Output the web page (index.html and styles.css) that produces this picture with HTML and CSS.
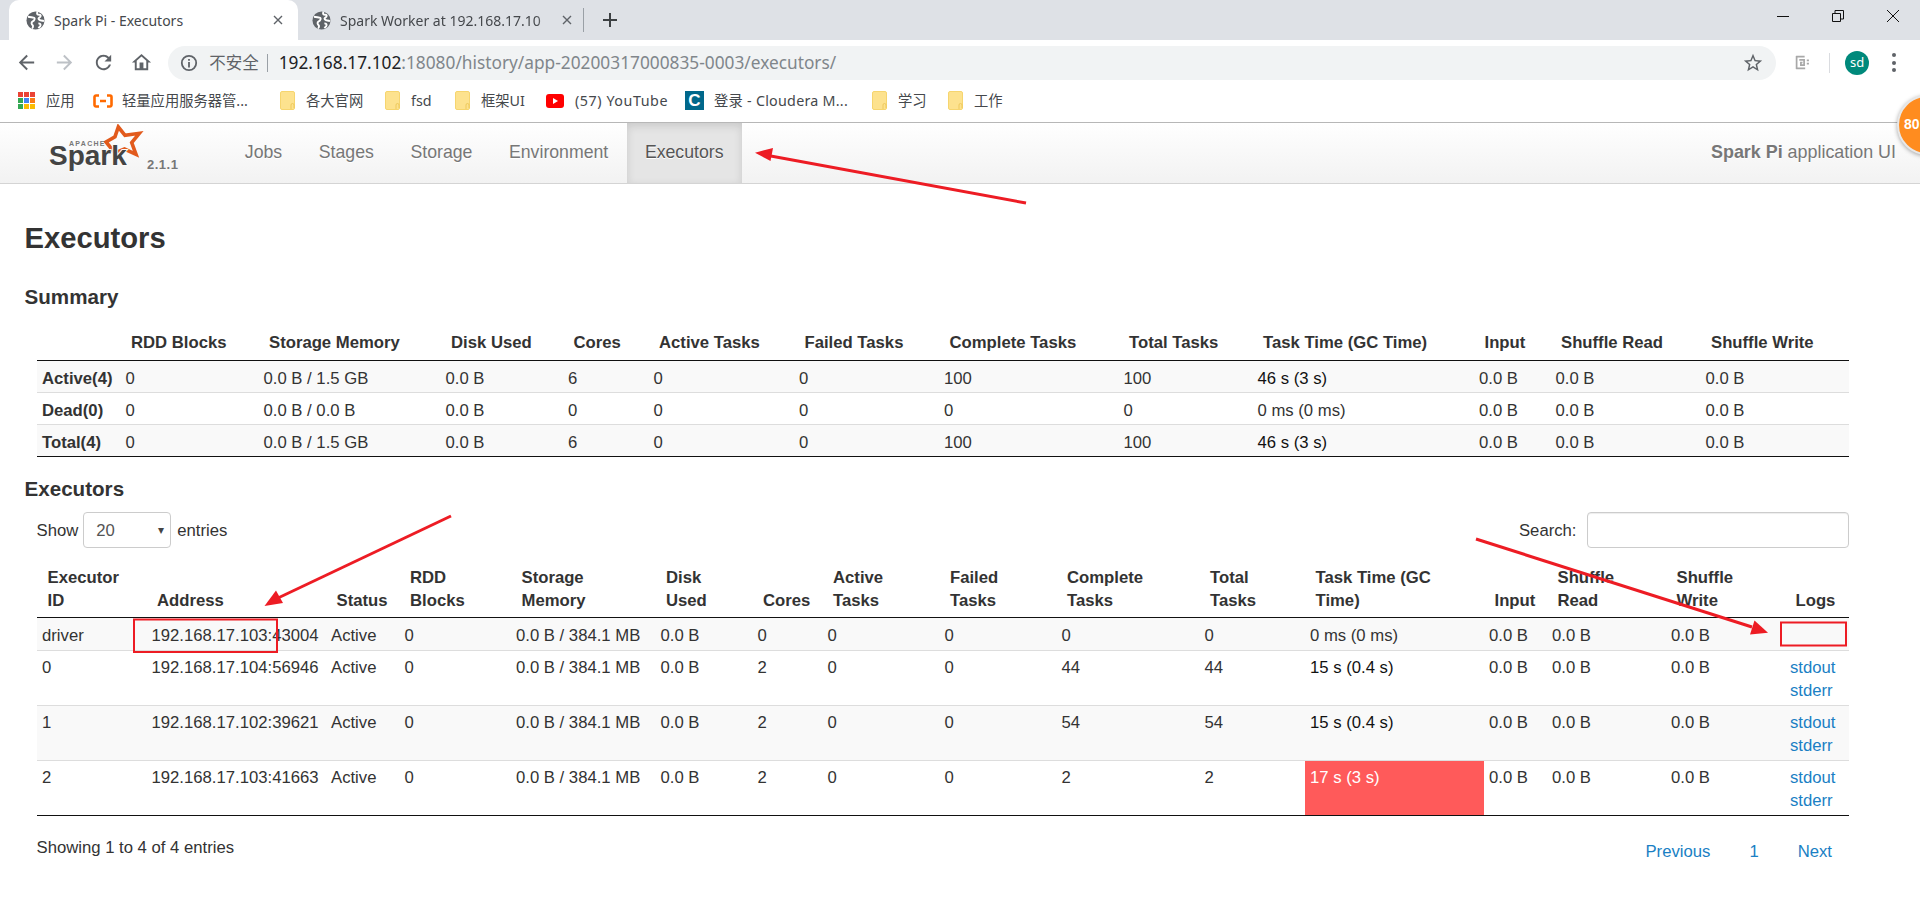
FILE: index.html
```html
<!DOCTYPE html>
<html lang="zh">
<head>
<meta charset="utf-8">
<title>Spark Pi - Executors</title>
<link rel="stylesheet" href="styles.css">
</head>
<body>
<svg class="defs" width="0" height="0">
  <symbol id="globe" viewBox="0 0 20 20">
    <circle cx="10" cy="10" r="9.5" fill="#5f6368"/>
    <path d="M2 6c3 0 4 1 6 1s1 3-1 4-1 3 0 4 0 3-1 3M12 1c-1 2 0 3 2 3s2 2 0 3 0 3 2 3 3 1 3 1M13 13c2 0 3 1 2 3l-2 2" fill="none" stroke="#fff" stroke-width="2"/>
  </symbol>
  <symbol id="folder" viewBox="0 0 15 19">
    <rect x=".5" y=".5" width="14" height="18" rx="1.5" fill="#fde28e" stroke="#f6d56f"/>
    <path d="M11 18v-4a1.5 1.5 0 0 1 3 0v3" fill="none" stroke="#eec95c"/>
  </symbol>
</svg>

<header class="chrome">
  <div class="tabstrip">
    <div class="tab tab-active">
      <svg class="favicon"><use href="#globe"/></svg>
      <span class="tab-title">Spark Pi - Executors</span>
      <svg class="tab-close" viewBox="0 0 10 10"><path d="M1 1l8 8M9 1l-8 8"/></svg>
    </div>
    <div class="tab tab-second">
      <svg class="favicon"><use href="#globe"/></svg>
      <span class="tab-title tab-fade">Spark Worker at 192.168.17.10</span>
      <svg class="tab-close" viewBox="0 0 10 10"><path d="M1 1l8 8M9 1l-8 8"/></svg>
    </div>
    <span class="tab-sep"></span>
    <svg class="tab-new" viewBox="0 0 14 14"><path d="M7 0v14M0 7h14"/></svg>
    <div class="winctl">
      <svg viewBox="0 0 12 12"><path d="M0 6.5h12"/></svg>
      <svg viewBox="0 0 12 12"><path d="M.5 3.5h8v8h-8zM3 3V.5h8.500V9H9"/></svg>
      <svg viewBox="0 0 12 12"><path d="M0 0l12 12M12 0L0 12"/></svg>
    </div>
  </div>

  <div class="toolbar">
    <svg class="tool-icon ic-dark" viewBox="0 0 24 24"><path d="M20 11H7.830l5.590-5.590L12 4l-8 8 8 8 1.410-1.410L7.830 13H20v-2z"/></svg>
    <svg class="tool-icon ic-light" viewBox="0 0 24 24"><path d="M4 11h12.170l-5.590-5.590L12 4l8 8-8 8-1.410-1.410L16.170 13H4v-2z"/></svg>
    <svg class="tool-icon ic-dark" viewBox="0 0 24 24"><path d="M17.650 6.350C16.200 4.900 14.210 4 12 4c-4.420 0-7.990 3.580-7.990 8s3.570 8 7.990 8c3.730 0 6.840-2.550 7.730-6h-2.080c-.82 2.330-3.040 4-5.650 4-3.310 0-6-2.690-6-6s2.690-6 6-6c1.660 0 3.140.69 4.220 1.780L13 11h7V4l-2.350 2.350z"/></svg>
    <svg class="tool-icon ic-dark" viewBox="0 0 24 24"><path d="M12 5.690l5 4.500V18h-3v-6h-4v6H7v-7.810l5-4.500M12 3L2 12h3v8h14v-8h3L12 3z"/></svg>
    <div class="omnibox">
      <svg class="omni-info" viewBox="0 0 20 20"><circle cx="10" cy="10" r="8" fill="none" stroke="#5f6368" stroke-width="2"/><path d="M9 9h2v6H9zM9 5.500h2v2H9z" fill="#5f6368"/></svg>
      <span class="omni-warn">不安全</span>
      <span class="omni-sep"></span>
      <span class="omni-url"><span class="omni-host">192.168.17.102</span>:18080/history/app-20200317000835-0003/executors/</span>
      <svg class="omni-star" viewBox="0 0 24 24"><path d="M22 9.240l-7.190-.62L12 2 9.190 8.630 2 9.240l5.460 4.730L5.820 21 12 17.270 18.180 21l-1.630-7.030L22 9.240zM12 15.400l-3.760 2.270 1-4.280-3.320-2.880 4.380-.38L12 6.100l1.710 4.040 4.380.38-3.320 2.880 1 4.280L12 15.400z"/></svg>
    </div>
    <svg class="ext-icon" viewBox="0 0 14 14"><path d="M1 1.500h8M1.500 1v12M1 12.500h8.500M4 4.500h4.500v5H5.500V7H7M11 5h2M11 8h2" fill="none" stroke="#a8a8a8" stroke-width="1.600"/></svg>
    <span class="tool-sep"></span>
    <span class="avatar">sd</span>
    <span class="menu-dots"><i></i><i></i><i></i></span>
  </div>

  <div class="bookmarks">
    <div class="bm">
      <span class="apps">
        <i class="c-r"></i><i class="c-r"></i><i class="c-r"></i>
        <i class="c-g"></i><i class="c-b"></i><i class="c-o"></i>
        <i class="c-g"></i><i class="c-y"></i><i class="c-y"></i>
      </span>
      <span>应用</span>
    </div>
    <div class="bm">
      <svg class="bm-ali" viewBox="0 0 20 14"><path d="M6 1.500H3A1.500 1.500 0 0 0 1.500 3v8A1.500 1.500 0 0 0 3 12.500h3M14 1.500h3A1.500 1.500 0 0 1 18.500 3v8a1.500 1.500 0 0 1-1.500 1.500h-3M7 7h6"/></svg>
      <span>轻量应用服务器管...</span>
    </div>
    <div class="bm"><svg class="bm-folder"><use href="#folder"/></svg><span>各大官网</span></div>
    <div class="bm"><svg class="bm-folder"><use href="#folder"/></svg><span>fsd</span></div>
    <div class="bm"><svg class="bm-folder"><use href="#folder"/></svg><span>框架UI</span></div>
    <div class="bm">
      <svg class="bm-yt" viewBox="0 0 18 14"><rect width="18" height="14" rx="3" fill="#f00"/><path d="M7 4l5 3-5 3z" fill="#fff"/></svg>
      <span class="bm-wide">(57) YouTube</span>
    </div>
    <div class="bm"><span class="bm-c">C</span><span class="bm-wider">登录 - Cloudera M...</span></div>
    <div class="bm"><svg class="bm-folder"><use href="#folder"/></svg><span>学习</span></div>
    <div class="bm"><svg class="bm-folder"><use href="#folder"/></svg><span>工作</span></div>
  </div>
</header>

<nav class="navbar">
  <div class="brand">
    <svg class="logo" viewBox="0 0 100 50">
      <polygon class="logo-star" points="73.300,3 80,11.300 94.300,9.300 86.700,18.700 91,30.300 79.500,25 70,29 61,18 70,12.700"/>
      <text class="logo-apache" x="24" y="22">APACHE</text>
      <text class="logo-spark" x="4" y="41">Spark</text>
    </svg>
    <span class="version">2.1.1</span>
  </div>
  <a class="nav-link">Jobs</a>
  <a class="nav-link">Stages</a>
  <a class="nav-link">Storage</a>
  <a class="nav-link">Environment</a>
  <a class="nav-link nav-active">Executors</a>
  <p class="nav-right"><strong>Spark Pi</strong> application UI</p>
</nav>

<main class="content">
  <h1>Executors</h1>
  <h2 class="h-summary">Summary</h2>
  <table class="grid summary">
    <colgroup>
      <col class="s1"><col class="s2"><col class="s3"><col class="s4"><col class="s5"><col class="s6"><col class="s7"><col class="s8"><col class="s9"><col class="s10"><col class="s11"><col class="s12"><col class="s13">
    </colgroup>
    <thead>
      <tr><th></th><th>RDD Blocks</th><th>Storage Memory</th><th>Disk Used</th><th>Cores</th><th>Active Tasks</th><th>Failed Tasks</th><th>Complete Tasks</th><th>Total Tasks</th><th>Task Time (GC Time)</th><th>Input</th><th>Shuffle Read</th><th>Shuffle Write</th></tr>
    </thead>
    <tbody>
      <tr class="odd"><td class="rowhead">Active(4)</td><td>0</td><td>0.0 B / 1.5 GB</td><td>0.0 B</td><td>6</td><td>0</td><td>0</td><td>100</td><td>100</td><td class="dark">46 s (3 s)</td><td>0.0 B</td><td>0.0 B</td><td>0.0 B</td></tr>
      <tr><td class="rowhead">Dead(0)</td><td>0</td><td>0.0 B / 0.0 B</td><td>0.0 B</td><td>0</td><td>0</td><td>0</td><td>0</td><td>0</td><td>0 ms (0 ms)</td><td>0.0 B</td><td>0.0 B</td><td>0.0 B</td></tr>
      <tr class="odd"><td class="rowhead">Total(4)</td><td>0</td><td>0.0 B / 1.5 GB</td><td>0.0 B</td><td>6</td><td>0</td><td>0</td><td>100</td><td>100</td><td class="dark">46 s (3 s)</td><td>0.0 B</td><td>0.0 B</td><td>0.0 B</td></tr>
    </tbody>
  </table>

  <h2 class="h-exec">Executors</h2>
  <div class="table-controls">
    <div class="length">
      <span>Show</span>
      <div class="select"><span>20</span><span class="select-arrow">▾</span></div>
      <span>entries</span>
    </div>
    <div class="search">
      <span>Search:</span>
      <input class="search-input" type="text" aria-label="Search">
    </div>
  </div>
  <table class="grid executors">
    <colgroup>
      <col class="e1"><col class="e2"><col class="e3"><col class="e4"><col class="e5"><col class="e6"><col class="e7"><col class="e8"><col class="e9"><col class="e10"><col class="e11"><col class="e12"><col class="e13"><col class="e14"><col class="e15"><col class="e16">
    </colgroup>
    <thead>
      <tr><th>Executor<br>ID</th><th>Address</th><th>Status</th><th>RDD<br>Blocks</th><th>Storage<br>Memory</th><th>Disk<br>Used</th><th>Cores</th><th>Active<br>Tasks</th><th>Failed<br>Tasks</th><th>Complete<br>Tasks</th><th>Total<br>Tasks</th><th>Task Time (GC<br>Time)</th><th>Input</th><th>Shuffle<br>Read</th><th>Shuffle<br>Write</th><th>Logs</th></tr>
    </thead>
    <tbody>
      <tr class="odd short"><td>driver</td><td>192.168.17.103:43004</td><td>Active</td><td>0</td><td>0.0 B / 384.1 MB</td><td>0.0 B</td><td>0</td><td>0</td><td>0</td><td>0</td><td>0</td><td>0 ms (0 ms)</td><td>0.0 B</td><td>0.0 B</td><td>0.0 B</td><td></td></tr>
      <tr><td>0</td><td>192.168.17.104:56946</td><td>Active</td><td>0</td><td>0.0 B / 384.1 MB</td><td>0.0 B</td><td>2</td><td>0</td><td>0</td><td>44</td><td>44</td><td class="dark">15 s (0.4 s)</td><td>0.0 B</td><td>0.0 B</td><td>0.0 B</td><td><a class="log">stdout</a><a class="log">stderr</a></td></tr>
      <tr class="odd"><td>1</td><td>192.168.17.102:39621</td><td>Active</td><td>0</td><td>0.0 B / 384.1 MB</td><td>0.0 B</td><td>2</td><td>0</td><td>0</td><td>54</td><td>54</td><td class="dark">15 s (0.4 s)</td><td>0.0 B</td><td>0.0 B</td><td>0.0 B</td><td><a class="log">stdout</a><a class="log">stderr</a></td></tr>
      <tr><td>2</td><td>192.168.17.103:41663</td><td>Active</td><td>0</td><td>0.0 B / 384.1 MB</td><td>0.0 B</td><td>2</td><td>0</td><td>0</td><td>2</td><td>2</td><td class="hot">17 s (3 s)</td><td>0.0 B</td><td>0.0 B</td><td>0.0 B</td><td><a class="log">stdout</a><a class="log">stderr</a></td></tr>
    </tbody>
  </table>
  <div class="table-footer">
    <span class="info">Showing 1 to 4 of 4 entries</span>
    <div class="pager"><a>Previous</a><a>1</a><a>Next</a></div>
  </div>
</main>

<div class="badge"><span>80</span></div>

<svg class="annot" viewBox="0 0 1920 904">
  <path class="annot-line" d="M1026 203L768 155.500"/>
  <path class="annot-head" d="M755 152.700L773 148L770.500 161z"/>
  <path class="annot-line" d="M451 516L278 598"/>
  <path class="annot-head" d="M264.500 606L276 590.500L283 603z"/>
  <path class="annot-line" d="M1476 539L1752 627"/>
  <path class="annot-head" d="M1768 632.700L1750 634.500L1754.500 620.500z"/>
  <rect class="annot-box" x="134" y="619.500" width="143" height="32.500"/>
  <rect class="annot-box" x="1781" y="622.500" width="65" height="23"/>
</svg>
</body>
</html>
```
FILE: styles.css
```css
* { box-sizing: border-box; }
html, body { margin: 0; height: 904px; overflow: hidden; background: #fff; }
body { position: relative; font-family: "Liberation Sans", Arial, sans-serif; font-size: 16.700px; line-height: 23px; color: #333; }
.defs { position: absolute; }

/* browser chrome */
.chrome { font-family: "Noto Sans", "Noto Sans CJK SC", sans-serif; color: #3c4043; }
.tabstrip { height: 40px; background: #dee1e6; display: flex; align-items: center; padding-left: 9px; }
.tab { width: 289px; height: 40px; display: flex; align-items: center; padding: 0 16px 0 17px; border-radius: 10px 10px 0 0; }
.tab-second { padding-left: 14px; }
.tab-active { background: #fff; }
.favicon { width: 19px; height: 19px; flex: none; }
.tab-title { flex: 1; margin-left: 9px; font-size: 14px; white-space: nowrap; overflow: hidden; color: #45484c; }
.tab-fade { -webkit-mask-image: linear-gradient(90deg, #000 88%, transparent 100%); mask-image: linear-gradient(90deg, #000 88%, transparent 100%); }
.tab-close { width: 10px; height: 10px; flex: none; margin-right: -1px; fill: none; stroke: #5f6368; stroke-width: 1.4; }
.tab-sep { width: 1px; height: 24px; margin-left: -4px; background: #9aa0a6; }
.tab-new { width: 14px; height: 14px; margin-left: 19px; fill: none; stroke: #3c4043; stroke-width: 2; }
.winctl { margin-left: auto; display: flex; gap: 43px; padding-right: 21px; align-self: flex-start; padding-top: 10px; }
.winctl svg { width: 12px; height: 12px; fill: none; stroke: #111; stroke-width: 1; }

.toolbar { height: 42px; display: flex; align-items: center; padding: 3px 0 0 15px; }
.tool-icon { width: 23px; height: 23px; flex: none; margin-right: 15.300px; }
.ic-dark { fill: #5f6368; }
.ic-light { fill: #bdc1c6; }
.omnibox { width: 1608px; height: 34px; margin-left: 0; border-radius: 17px; background: #f1f3f4; display: flex; align-items: center; padding: 0 12px 0 12px; }
.omni-info { width: 18px; height: 18px; flex: none; }
.omni-warn { margin-left: 11px; font-size: 16.500px; color: #5f6368; }
.omni-sep { width: 1px; height: 18px; margin: 0 11px 0 8px; background: #9aa0a6; }
.omni-url { font-size: 17.300px; color: #80868b; white-space: nowrap; font-family: "Noto Sans", sans-serif; }
.omni-host { color: #202124; }
.omni-star { width: 22px; height: 22px; margin-left: auto; fill: #5f6368; }
.ext-icon { width: 15px; height: 15px; margin-left: 19px; flex: none; }
.tool-sep { width: 1px; height: 20px; margin-left: 19px; background: #dadce0; }
.avatar { width: 24px; height: 24px; margin-left: 15px; border-radius: 50%; background: #00897b; color: #fff; font-size: 13px; text-align: center; line-height: 23px; }
.menu-dots { margin-left: 23px; display: flex; flex-direction: column; gap: 3.500px; }
.menu-dots i { width: 4px; height: 4px; border-radius: 50%; background: #5f6368; }

.bookmarks { height: 41px; display: grid; grid-template-columns: 75px 187px 105px 70px 91px 139px 187px 76px 1fr; padding: 0 0 3px 18px; align-items: center; border-bottom: 1px solid #b7b7b7; font-size: 14.300px; color: #45484c; white-space: nowrap; }
.bm { display: flex; align-items: center; gap: 11px; }
.bm-wide { letter-spacing: .55px; }
.bm-wider { letter-spacing: .25px; }
.apps { display: grid; grid-template-columns: repeat(3, 5px); grid-auto-rows: 5px; gap: 1px; }
.c-r { background: #ea4335; }
.c-g { background: #34a853; }
.c-b { background: #4285f4; }
.c-o { background: #fa7b17; }
.c-y { background: #fbbc04; }
.bm-ali { width: 20px; height: 14px; flex: none; margin-right: -2px; fill: none; stroke: #ff6a00; stroke-width: 2.600; }
.bm-folder { width: 15px; height: 19px; flex: none; }
.bm-yt { width: 18px; height: 14px; flex: none; }
.bm-c { width: 19px; height: 19px; flex: none; margin-right: -1px; background: #00688b; color: #fff; font: bold 17px/19px "Liberation Sans", sans-serif; text-align: center; }

/* spark nav */
.navbar { height: 61px; display: flex; align-items: stretch; background: linear-gradient(#fff, #f2f2f2); border-bottom: 1px solid #d4d4d4; }
.brand { width: 226.500px; flex: none; display: flex; padding-left: 45px; }
.logo { width: 100px; height: 50px; margin-top: 1px; flex: none; }
.logo-star { fill: none; stroke: #e25a1c; stroke-width: 3.600; stroke-linejoin: miter; }
.logo-apache { font: bold 7px "Liberation Sans", sans-serif; letter-spacing: 1.300px; fill: #777; }
.logo-spark { font: bold 28px "Liberation Sans", sans-serif; fill: #444; stroke: #f9f9f9; stroke-width: 2px; paint-order: stroke; }
.version { margin: 32px 0 0 2px; font-size: 13px; font-weight: bold; color: #777; letter-spacing: .5px; line-height: 20px; }
.nav-link { padding: 0 18.300px; font-size: 17.700px; line-height: 59px; color: #777; text-shadow: 0 1px 0 #fff; }
.nav-active { color: #555; background: #e5e5e5; box-shadow: inset 0 3px 8px rgba(0,0,0,.125); }
.nav-right { margin: 0 24px 0 auto; font-size: 17.900px; line-height: 59px; color: #777; text-shadow: 0 1px 0 #fff; }

/* page */
.content { padding-left: 24.500px; width: 1849px; }
h1 { margin: 39px 0 0; font-size: 29.200px; line-height: 30px; font-weight: bold; }
h2 { margin: 0; font-size: 20.600px; line-height: 24px; font-weight: bold; }
.h-summary { margin-top: 32px; }
.h-exec { margin-top: 20px; }
.grid { table-layout: fixed; border-collapse: collapse; margin-left: 12px; width: 1812.500px; }
.grid th { text-align: left; vertical-align: bottom; font-weight: bold; padding: 0 0 5.500px 11px; border-bottom: 1.600px solid #111; white-space: nowrap; }
.grid td { padding: 5px 5.500px 0; vertical-align: top; border-top: 1px solid #ddd; white-space: nowrap; }
.grid tbody tr:first-child td { border-top: 0; }
.grid tbody tr:last-child td { border-bottom: 1.400px solid #111; }
.odd td { background: #f9f9f9; }
.summary { margin-top: 22px; }
.summary th { padding-bottom: 6px; }
.summary td { height: 32px; padding-top: 5.500px; }
.summary .rowhead { font-weight: bold; }
.dark { color: #111; }
.s1 { width: 83.500px; } .s2 { width: 138px; } .s3 { width: 182px; } .s4 { width: 122.500px; } .s5 { width: 85.500px; }
.s6 { width: 145.500px; } .s7 { width: 145px; } .s8 { width: 179.500px; } .s9 { width: 134px; } .s10 { width: 221.500px; }
.s11 { width: 76.500px; } .s12 { width: 150px; } .s13 { width: 149px; }
.e1 { width: 109.500px; } .e2 { width: 179.500px; } .e3 { width: 73.500px; } .e4 { width: 111.500px; } .e5 { width: 144.500px; }
.e6 { width: 97px; } .e7 { width: 70px; } .e8 { width: 117px; } .e9 { width: 117px; } .e10 { width: 143px; }
.e11 { width: 105.500px; } .e12 { width: 179px; } .e13 { width: 63px; } .e14 { width: 119px; } .e15 { width: 119px; } .e16 { width: 64.500px; }

.table-controls { margin: 11px 0 0 12px; width: 1812.500px; display: flex; justify-content: space-between; }
.length, .search { display: flex; align-items: center; }
.select { width: 88px; height: 36px; margin: 0 6px 0 5px; padding: 0 6px 0 12px; border: 1px solid #ccc; border-radius: 4px; display: flex; align-items: center; justify-content: space-between; color: #555; }
.select-arrow { font-size: 12px; color: #444; }
.search-input { width: 262.500px; height: 36px; margin: 0 0 0 10px; padding: 0; border: 1px solid #ccc; border-radius: 4px; background: #fff; box-shadow: inset 0 1px 1px rgba(0,0,0,.075); }
.executors { margin-top: 17.500px; }
.executors td { height: 55px; }
.executors .short td { height: 32.500px; padding-top: 6px; }
.executors .hot { background: #ff5a5a; color: #fff; }
.log { display: block; color: #1a7fc4; }

.table-footer { margin: 20px 0 0 12px; width: 1812.500px; display: flex; justify-content: space-between; }
.pager { display: flex; margin-top: 4px; color: #1a7fc4; }
.pager a:nth-child(1) { margin-right: 39px; }
.pager a:nth-child(2) { margin-right: 39px; }
.pager a:nth-child(3) { margin-right: 17px; }

/* overlays */
.badge { position: absolute; left: 1897px; top: 95px; width: 60px; height: 60px; border-radius: 50%; background: #ff8c1f; border: 2px solid #e8e8e8; box-shadow: 0 1px 4px rgba(0,0,0,.35); color: #fff; font: bold 14px/54px "Liberation Sans", sans-serif; padding-left: 5px; }
.annot { position: absolute; left: 0; top: 0; width: 1920px; height: 904px; pointer-events: none; }
.annot-line { stroke: #ed1c24; stroke-width: 3; fill: none; }
.annot-head { fill: #ed1c24; }
.annot-box { stroke: #ed1c24; stroke-width: 2; fill: none; }
```
